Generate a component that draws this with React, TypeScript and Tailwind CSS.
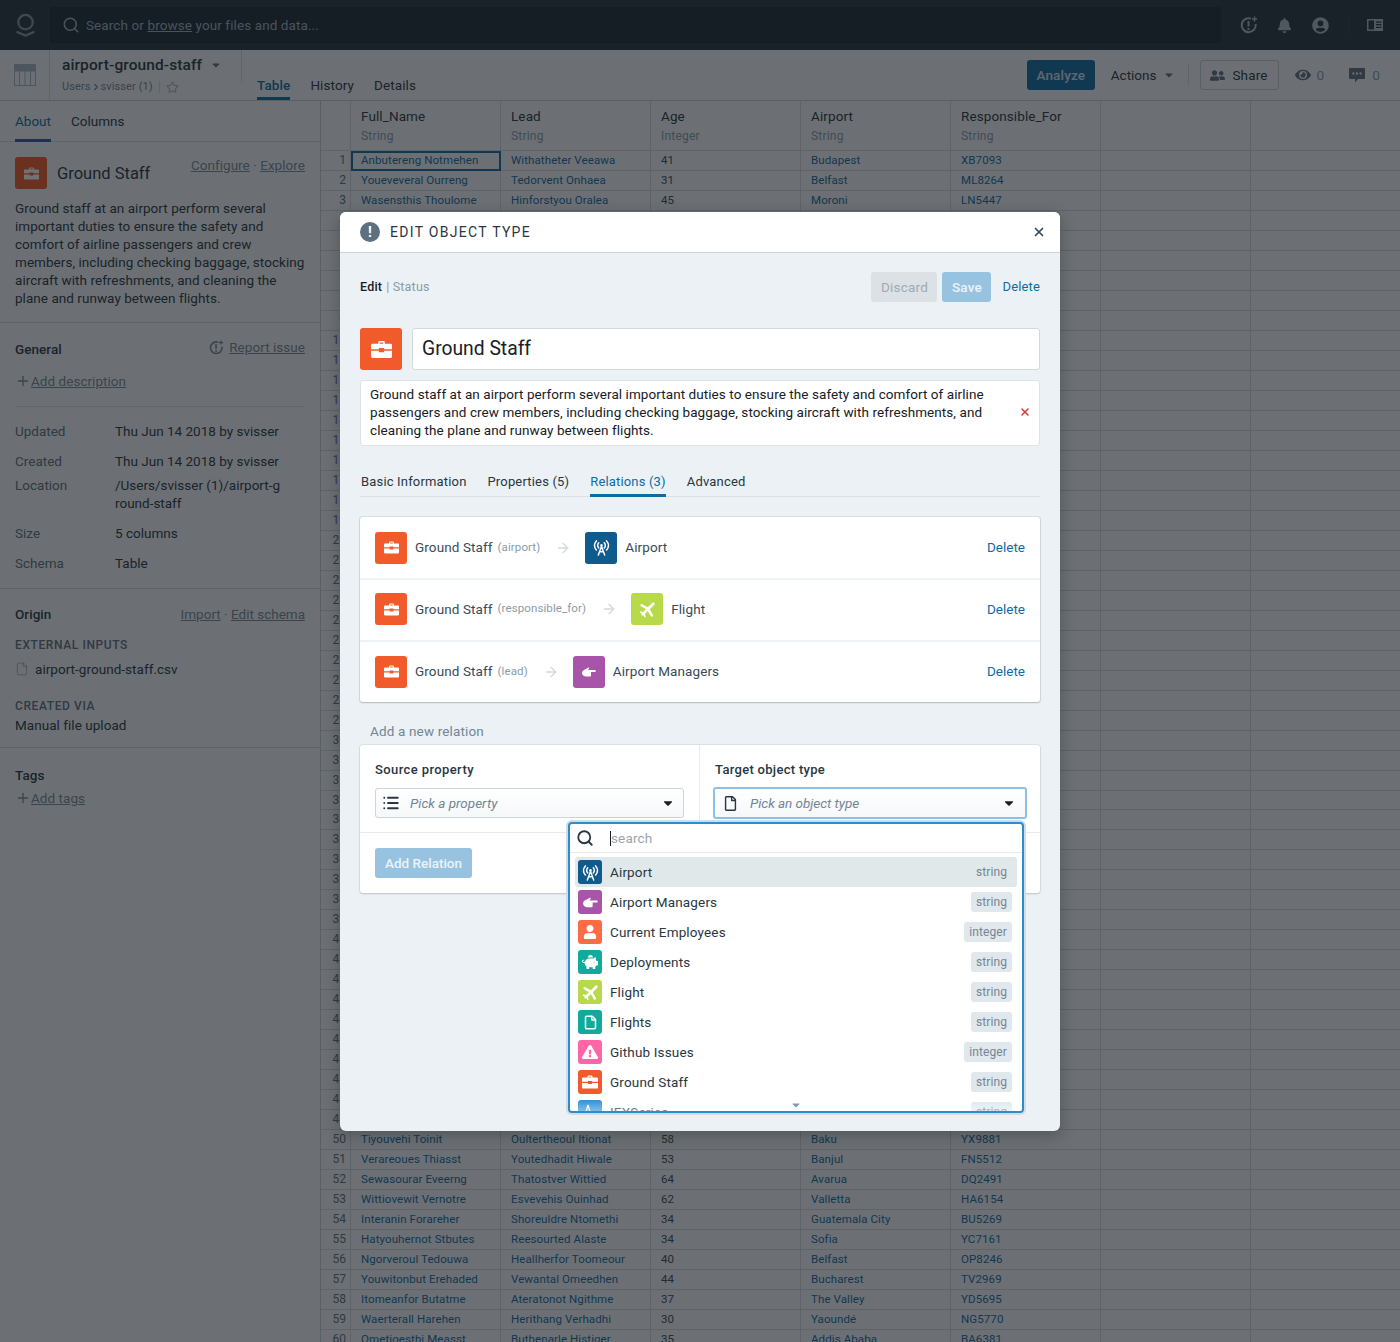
import React from 'react';
import { Search, Star, File, Activity, ChevronRight, Plus, X, ArrowRight, List } from 'lucide-react';
import {
  FaBell, FaUserCircle, FaUserFriends, FaEye,
  FaPiggyBank, FaUser, FaExclamationTriangle, FaCaretDown, FaRegFile,
} from 'react-icons/fa';

type Row = string[];

const topRows: Row[] = [
  ['Anbutereng Notmehen', 'Withatheter Veeawa', '41', 'Budapest', 'XB7093'],
  ['Youeveveral Ourreng', 'Tedorvent Onhaea', '31', 'Belfast', 'ML8264'],
  ['Wasensthis Thoulome', 'Hinforstyou Oralea', '45', 'Moroni', 'LN5447'],
];

const bottomRows: Row[] = [
  ['Tiyouvehi Toinit', 'Oultertheoul Itionat', '58', 'Baku', 'YX9881'],
  ['Verareoues Thiasst', 'Youtedhadit Hiwale', '53', 'Banjul', 'FN5512'],
  ['Sewasourar Eveerng', 'Thatostver Wittied', '64', 'Avarua', 'DQ2491'],
  ['Wittiovewit Vernotre', 'Esvevehis Ouinhad', '62', 'Valletta', 'HA6154'],
  ['Interanin Forareher', 'Shoreuldre Ntomethi', '34', 'Guatemala City', 'BU5269'],
  ['Hatyouhernot Stbutes', 'Reesourted Alaste', '34', 'Sofia', 'YC7161'],
  ['Ngorveroul Tedouwa', 'Heallherfor Toomeour', '40', 'Belfast', 'OP8246'],
  ['Youwitonbut Erehaded', 'Vewantal Omeedhen', '44', 'Bucharest', 'TV2969'],
  ['Itomeanfor Butatme', 'Ateratonot Ngithme', '37', 'The Valley', 'YD5695'],
  ['Waerterall Harehen', 'Herithang Verhadhi', '30', 'Yaoundé', 'NG5770'],
  ['Ometioesthi Measst', 'Buthenarle Histiger', '35', 'Addis Ababa', 'BA6381'],
];

const columns = [
  ['Full_Name', 'String'],
  ['Lead', 'String'],
  ['Age', 'Integer'],
  ['Airport', 'String'],
  ['Responsible_For', 'String'],
  ['', ''],
  ['', ''],
];

const Briefcase = ({ className }: { className?: string }) => (
  <svg viewBox="0 0 16 16" className={className} fill="currentColor">
    <path d="M5.5 3.6V2.4c0-.5.4-.9.9-.9h3.2c.5 0 .9.4.9.9v1.2H15c.5 0 1 .4 1 1v3.2H10v-.9H6v.9H0V4.6c0-.6.5-1 1-1h4.5zm1.2 0h2.6V2.7H6.7v.9zM0 9h6v1h4V9h6v4.4c0 .6-.5 1-1 1H1c-.5 0-1-.4-1-1V9z" />
  </svg>
);

const Antenna = ({ className }: { className?: string }) => (
  <svg viewBox="0 0 16 16" className={className} fill="none" stroke="currentColor" strokeWidth="1.4" strokeLinecap="round">
    <path d="M8 7l-3 8M8 7l3 8M6.2 12h3.6" />
    <circle cx="8" cy="6" r="1.2" fill="currentColor" stroke="none" />
    <path d="M5.4 3.6c-1.2 1.4-1.2 3.4 0 4.8M10.6 3.6c1.2 1.4 1.2 3.4 0 4.8M3.2 1.8c-2.2 2.6-2.2 6 0 8.6M12.8 1.8c2.2 2.6 2.2 6 0 8.6" />
  </svg>
);

const Plane = ({ className }: { className?: string }) => (
  <svg viewBox="0 0 16 16" className={className} fill="none" stroke="currentColor" strokeLinecap="round">
    <path d="M3.5 12.5L13.5 2.5" strokeWidth="2.6" />
    <path d="M8.5 7.5L2.5 4M8.5 7.5L12 13.5" strokeWidth="2.4" />
    <path d="M4.5 11.5L1.5 10.5M4.5 11.5L5.5 14.5" strokeWidth="1.5" />
  </svg>
);

const PointingHand = ({ className }: { className?: string }) => (
  <svg viewBox="0 0 16 16" className={className} fill="currentColor">
    <path d="M1 9c0-2 1.5-3 3-3.5l3.5-2c.6-.3 1 .4.6 1L7 6h7.2c.6 0 .8 1.9 0 2H10v3.5c0 .7-.5 1-1 1H5c-2 0-4-1.5-4-3.5z" />
  </svg>
);

const Logo = () => (
  <svg viewBox="0 0 20 26" className="w-[19px] h-[25px] text-[#8b9298]" fill="none" stroke="currentColor" strokeWidth="2.4">
    <circle cx="10" cy="9.5" r="7.6" />
    <path d="M1.5 20l8.5 3.6 8.5-3.6" strokeLinecap="round" />
  </svg>
);

// circle with an exclamation mark and a small plus in its top right corner
const NewIssue = ({ className }: { className?: string }) => (
  <svg viewBox="0 0 18 18" className={className} fill="none" stroke="currentColor">
    <path d="M11 2.6A7 7 0 1 0 15.6 8" strokeWidth="2" />
    <path d="M8.5 5v5.5M8.5 12v2" strokeWidth="2" />
    <path d="M14.5 0.5v5M12 3h5" strokeWidth="1.5" />
  </svg>
);

const CommentIcon = ({ className }: { className?: string }) => (
  <svg viewBox="0 0 16 16" className={className} fill="currentColor">
    <path d="M1 1h14a1 1 0 0 1 1 1v9a1 1 0 0 1-1 1H9l-3 3.5V12H1a1 1 0 0 1-1-1V2a1 1 0 0 1 1-1z" />
    <path d="M3.4 5.4h2v2h-2zM7 5.4h2v2H7zM10.6 5.4h2v2h-2z" fill="#f5f8fa" />
  </svg>
);

const TypeIcon = ({ bg, size, children }: { bg: string; size: string; children: React.ReactNode }) => (
  <div className={`${bg} ${size} rounded-[3px] flex items-center justify-center text-white shrink-0`}>{children}</div>
);

const Cell = ({ text, link, width }: { text: string; link?: boolean; width: string }) => (
  <div className={`${width} h-full shrink-0 border-r border-[#cfd6db] pl-[10px] truncate text-[11.5px] leading-[19px] tracking-[0.1px] ${link ? 'text-[#106ba3]' : 'text-[#394b59]'}`}>
    {text}
  </div>
);

const TableRow = ({ num, data }: { num: number; data?: Row }) => (
  <div className="flex h-[19.99px] border-b border-[#cfd6db] bg-[#f5f8fa]">
    <div className="w-[30px] shrink-0 h-full border-r border-[#cfd6db] pr-[4px] text-right text-[12px] leading-[19px] text-[#5c7080]">{num}</div>
    <Cell width="w-[150px]" text={data ? data[0] : ''} link />
    <Cell width="w-[150px]" text={data ? data[1] : ''} link />
    <Cell width="w-[150px]" text={data ? data[2] : ''} />
    <Cell width="w-[150px]" text={data ? data[3] : ''} link />
    <Cell width="w-[150px]" text={data ? data[4] : ''} link />
    <Cell width="w-[150px]" text="" />
    <div className="flex-1" />
  </div>
);

const Sidebar = () => (
  <aside className="w-[321px] shrink-0 border-r border-[#c5ccd2] bg-[#f5f8fa] text-[13.5px] tracking-[0.04px] text-[#293742]">
    <div className="h-[41px] flex gap-5 px-[15px] border-b border-[#cfd6db] tracking-normal">
      <span className="h-[41px] pt-[10px] border-b-[3px] border-[#106ba3] text-[#106ba3]">About</span>
      <span className="pt-[10px]">Columns</span>
    </div>
    <div className="h-[181px] px-[15px] pt-[15px] border-b border-[#cfd6db]">
      <div className="flex items-start">
        <TypeIcon bg="bg-[#f15a2b]" size="w-8 h-8">
          <Briefcase className="w-[15px] h-[15px]" />
        </TypeIcon>
        <span className="ml-[10px] mt-[6px] text-[16.5px] leading-[22px] tracking-normal">Ground Staff</span>
        <span className="ml-auto -mt-[2px] text-[#7a8a96]"><span className="underline">Configure</span> · <span className="underline">Explore</span></span>
      </div>
      <p className="mt-[10px] leading-[18px] w-[295px]">
        Ground staff at an airport perform several important duties to ensure the safety and comfort of airline passengers and crew members, including checking baggage, stocking aircraft with refreshments, and cleaning the plane and runway between flights.
      </p>
    </div>
    <div className="h-[266px] px-[15px] pt-[16px] border-b border-[#cfd6db]">
      <div className="flex justify-between leading-[20px]">
        <span className="font-medium">General</span>
        <span className="flex items-center gap-[5px] text-[#7a8a96] -mt-1">
          <NewIssue className="w-[15px] h-[15px]" />
          <span className="underline">Report issue</span>
        </span>
      </div>
      <div className="mt-3 flex items-center text-[#7a8a96] leading-[20px]">
        <Plus className="w-4 h-4" />
        <span className="underline">Add description</span>
      </div>
      <div className="mt-[15px] border-t border-[#d8e1e8]" />
      <div className="mt-[15px] grid grid-cols-[100px_167px] leading-[18px] tracking-normal [&>span:nth-child(odd)]:text-[#5c7080]">
        <span>Updated</span><span>Thu Jun 14 2018 by svisser</span>
        <span className="mt-3">Created</span><span className="mt-3">Thu Jun 14 2018 by svisser</span>
        <span className="mt-[6px]">Location</span><span className="mt-[6px] break-all">/Users/svisser (1)/airport-ground-staff</span>
        <span className="mt-3">Size</span><span className="mt-3">5 columns</span>
        <span className="mt-3">Schema</span><span className="mt-3">Table</span>
      </div>
    </div>
    <div className="h-[159px] px-[15px] pt-[15px] border-b border-[#cfd6db]">
      <div className="flex justify-between leading-[20px]">
        <span className="font-medium">Origin</span>
        <span className="text-[#7a8a96] tracking-normal"><span className="underline">Import</span> · <span className="underline">Edit schema</span></span>
      </div>
      <div className="mt-[13px] text-[12px] font-medium tracking-[0.6px] text-[#5c7080] leading-[16px]">EXTERNAL INPUTS</div>
      <div className="mt-[6px] flex items-center gap-[6px] leading-[20px]">
        <File className="w-[14px] h-4 text-[#7a8a96]" strokeWidth={1} />
        <span>airport-ground-staff.csv</span>
      </div>
      <div className="mt-[19px] text-[12px] font-medium tracking-[0.6px] text-[#5c7080] leading-[16px]">CREATED VIA</div>
      <div className="mt-[1px] leading-[20px]">Manual file upload</div>
    </div>
    <div className="px-[15px] pt-[17px]">
      <div className="font-medium leading-[20px]">Tags</div>
      <div className="mt-[3px] flex items-center text-[#7a8a96] leading-[20px]">
        <Plus className="w-4 h-4" />
        <span className="underline">Add tags</span>
      </div>
    </div>
  </aside>
);

const DataTable = () => (
  <main className="flex-1 overflow-hidden bg-[#f5f8fa]">
    <div className="flex h-[50px] border-b border-[#cfd6db]">
      <div className="w-[30px] shrink-0 border-r border-[#cfd6db]" />
      {columns.map((c, i) => (
        <div key={i} className={`${i === 6 ? 'flex-1' : 'w-[150px] border-r border-[#cfd6db]'} shrink-0 pl-[10px] pt-[6px]`}>
          <div className="text-[13.5px] leading-[18px] tracking-[0.1px] text-[#293742]">{c[0]}</div>
          <div className="mt-[3px] text-[12px] leading-[16px] tracking-[0.2px] text-[#8a9ba8]">{c[1]}</div>
        </div>
      ))}
    </div>
    <div className="relative">
      <div className="absolute left-[30px] top-0 w-[150px] h-[20px] border-2 border-[#106ba3]" />
      {Array.from({ length: 60 }, (_, i) => (
        <TableRow key={i} num={i + 1} data={i < 3 ? topRows[i] : i >= 49 ? bottomRows[i - 49] : undefined} />
      ))}
    </div>
  </main>
);

const relations = [
  { prop: '(airport)', target: 'Airport', bg: 'bg-[#0f5b8d]', icon: <Antenna className="w-[17px] h-[17px]" />, row: 'h-[61px]' },
  { prop: '(responsible_for)', target: 'Flight', bg: 'bg-[#b8d94a]', icon: <Plane className="w-[17px] h-[17px]" />, row: 'h-[62px] border-t-2 border-[#f0f3f5] pb-[2px]' },
  { prop: '(lead)', target: 'Airport Managers', bg: 'bg-[#a854a8]', icon: <PointingHand className="w-[16px] h-[16px]" />, row: 'h-[62px] border-t-2 border-[#f0f3f5] pb-[1px]' },
];

const options = [
  { name: 'Airport', tag: 'string', bg: 'bg-[#0f5b8d]', icon: <Antenna className="w-[17px] h-[17px]" /> },
  { name: 'Airport Managers', tag: 'string', bg: 'bg-[#a854a8]', icon: <PointingHand className="w-[17px] h-[17px]" /> },
  { name: 'Current Employees', tag: 'integer', bg: 'bg-[#ff6b45]', icon: <FaUser className="w-[14px] h-[14px]" /> },
  { name: 'Deployments', tag: 'string', bg: 'bg-[#10ab9c]', icon: <FaPiggyBank className="w-[16px] h-[16px]" /> },
  { name: 'Flight', tag: 'string', bg: 'bg-[#b8d94a]', icon: <Plane className="w-[17px] h-[17px]" /> },
  { name: 'Flights', tag: 'string', bg: 'bg-[#10ab9c]', icon: <File className="w-[15px] h-[15px]" strokeWidth={2.4} /> },
  { name: 'Github Issues', tag: 'integer', bg: 'bg-[#ff66a8]', icon: <FaExclamationTriangle className="w-[16px] h-[16px]" /> },
  { name: 'Ground Staff', tag: 'string', bg: 'bg-[#f15a2b]', icon: <Briefcase className="w-[16px] h-[16px]" /> },
  { name: 'IEXSeries', tag: 'string', bg: 'bg-[#2b8fd6]', icon: <Activity className="w-[16px] h-[16px]" /> },
];

const Dropdown = () => (
  <div className="absolute left-[228px] top-[76px] w-[456px] h-[291px] rounded-[4px] bg-white border-2 border-[#2b8ecb] shadow-[0_0_0_2px_#d3dce3] overflow-hidden">
    <div className="h-[29px] flex items-center border-b border-[#e6ebef] pl-[6px]">
      <Search className="w-[18px] h-[18px] text-[#293742]" strokeWidth={2.4} />
      <span className="ml-[16px] w-px h-[15px] bg-[#182026]" />
      <span className="text-[13.5px] tracking-[0.15px] text-[#9aa5ae]">search</span>
    </div>
    <div className="px-[5px] pt-[4px]">
      {options.map((o, i) => (
        <div key={o.name} className={`h-[30px] flex items-center pl-[3px] pr-[5px] rounded-[3px] ${i === 0 ? 'bg-[#e1e8ea]' : ''}`}>
          <TypeIcon bg={o.bg} size="w-6 h-6">{o.icon}</TypeIcon>
          <span className="ml-2 text-[13.5px] tracking-[0.15px] text-[#293742]">{o.name}</span>
          <span className={`ml-auto h-5 px-[5px] rounded-[3px] text-[12px] leading-[20px] tracking-[0.1px] text-[#738694] ${i === 0 ? '' : 'bg-[#e1e8ed]'}`}>{o.tag}</span>
        </div>
      ))}
    </div>
    <div className="absolute left-0 right-0 bottom-0 h-[12px] bg-gradient-to-t from-white/40 to-white/0" />
    <FaCaretDown className="absolute left-[220px] bottom-[0px] w-3 h-3 text-[#8a9ba8]" />
  </div>
);

const EditModal = () => (
  <div className="absolute left-[340px] top-[212px] w-[720px] h-[919px] rounded-[6px] bg-[#ebf1f5] shadow-[0_4px_16px_rgba(16,22,26,0.3)] text-[#182026]">
    <div className="h-[41px] bg-white rounded-t-[6px] border-b border-[#ccd3d8] flex items-center pl-5 pr-[14px]">
      <span className="w-5 h-5 rounded-full bg-[#5c7080] flex items-center justify-center text-white text-[14px] font-bold">!</span>
      <span className="ml-[10px] text-[14px] tracking-[1.3px] text-[#293742]">EDIT OBJECT TYPE</span>
      <X className="ml-auto w-[14px] h-[14px] text-[#394b59]" strokeWidth={3} />
    </div>
    <div className="px-5">
      <div className="mt-[19px] h-[30px] flex items-center text-[12.5px] tracking-[0.2px]">
        <span className="font-medium">Edit</span>
        <span className="ml-1 text-[#8a9ba8]">| Status</span>
        <span className="ml-auto w-[66px] h-[30px] rounded-[3px] bg-[#dbe1e5] text-[#9fabb4] text-[13.5px] leading-[30px] text-center">Discard</span>
        <span className="ml-[5px] w-[49px] h-[30px] rounded-[3px] bg-[#97c3e0] text-white/80 text-[13.5px] font-medium leading-[30px] text-center">Save</span>
        <span className="ml-[11px] text-[13px] tracking-[0.15px] text-[#106ba3]">Delete</span>
      </div>
      <div className="mt-[26px] flex gap-[10px]">
        <TypeIcon bg="bg-[#f15a2b]" size="w-[42px] h-[42px]">
          <Briefcase className="w-[21px] h-[21px]" />
        </TypeIcon>
        <div className="flex-1 h-[42px] bg-white border border-[#d3d9de] rounded-[3px] pl-[9px] text-[19.3px] leading-[40px]">Ground Staff</div>
      </div>
      <div className="mt-[10px] h-[66px] bg-white border border-[#dde3e8] rounded-[3px] pl-[9px] pr-[8px] pb-[2px] flex items-center">
        <p className="w-[625px] text-[13.5px] leading-[18px] tracking-[0.07px]">
          Ground staff at an airport perform several important duties to ensure the safety and comfort of airline passengers and crew members, including checking baggage, stocking aircraft with refreshments, and cleaning the plane and runway between flights.
        </p>
        <X className="ml-auto w-3 h-3 text-[#db3737]" strokeWidth={3} />
      </div>
      <div className="mt-[26px] pl-px flex gap-[21px] h-[25px] border-b border-[#d8e1e8] text-[13px] leading-[19px] tracking-[0.17px] text-[#293742]">
        <span>Basic Information</span>
        <span>Properties (5)</span>
        <span className="h-[25px] border-b-[3px] border-[#106ba3] text-[#106ba3]">Relations (3)</span>
        <span>Advanced</span>
      </div>
      <div className="mt-5 rounded-[3px] bg-white shadow-[0_0_0_1px_rgba(16,22,26,0.08),0_1px_2px_rgba(16,22,26,0.18)]">
        {relations.map((r) => (
          <div key={r.target} className={`${r.row} flex items-center px-[15px]`}>
            <TypeIcon bg="bg-[#f15a2b]" size="w-8 h-8">
              <Briefcase className="w-[15px] h-[15px]" />
            </TypeIcon>
            <span className="ml-2 text-[13.5px] tracking-[0.1px] text-[#394b59]">Ground Staff</span>
            <span className="ml-[5px] text-[11.5px] tracking-[0.1px] text-[#8a9ba8]">{r.prop}</span>
            <ArrowRight className="ml-[15px] mr-[14px] w-4 h-4 text-[#d3d9de]" />
            <TypeIcon bg={r.bg} size="w-8 h-8">{r.icon}</TypeIcon>
            <span className="ml-2 text-[13.5px] tracking-[0.1px] text-[#394b59]">{r.target}</span>
            <span className="ml-auto text-[13.5px] text-[#106ba3]">Delete</span>
          </div>
        ))}
      </div>
      <div className="mt-[20px] pl-[10px] text-[13.5px] leading-[18px] tracking-[0.15px] text-[#738694]">Add a new relation</div>
      <div className="mt-[5px] h-[148px] rounded-[3px] bg-white shadow-[0_0_0_1px_rgba(16,22,26,0.06),0_1px_2px_rgba(16,22,26,0.15)]">
        <div className="h-[88px] flex border-b border-[#e6ebef]">
          <div className="w-[340px] border-r border-[#e6ebef] pl-[15px] pr-[15px] pt-[16px]">
            <div className="text-[13px] leading-[18px] font-medium tracking-[0.4px] text-[#293742]">Source property</div>
            <div className="mt-[9px] h-[30px] rounded-[3px] border border-[#ced5da] bg-gradient-to-b from-white to-[#f5f8fa] flex items-center pl-[6px] pr-[8px]">
              <List className="w-[18px] h-[18px] text-[#293742]" strokeWidth={2.5} />
              <span className="ml-[10px] text-[13.5px] italic text-[#738694]">Pick a property</span>
              <FaCaretDown className="ml-auto w-[14px] h-[14px] text-[#182026]" />
            </div>
          </div>
          <div className="flex-1 pl-[15px] pr-[13px] pt-[16px]">
            <div className="text-[13px] leading-[18px] font-medium tracking-[0.3px] text-[#293742]">Target object type</div>
            <div className="-ml-[2px] mt-[8px] h-[32px] rounded-[3px] border-2 border-[#8fc0e4] bg-gradient-to-b from-white to-[#f5f8fa] flex items-center pl-[8px] pr-[9px]">
              <FaRegFile className="w-[15px] h-[15px] text-[#293742]" />
              <span className="ml-[12px] text-[13.5px] italic tracking-[-0.05px] text-[#738694]">Pick an object type</span>
              <FaCaretDown className="ml-auto w-[14px] h-[14px] text-[#182026]" />
            </div>
          </div>
        </div>
        <div className="pl-[15px] pt-[15px]">
          <div className="w-[97px] h-[30px] rounded-[3px] bg-[#97c3e0] text-white/80 text-[13.5px] font-medium leading-[30px] text-center">Add Relation</div>
        </div>
      </div>
    </div>
    <div className="absolute left-0 top-[534px] w-full h-0">
      <Dropdown />
    </div>
  </div>
);

export default function App() {
  return (
    <div className="relative w-[1400px] h-[1342px] overflow-hidden bg-[#f5f8fa] font-['Roboto',sans-serif]">
      <header className="h-[50px] bg-[#27343f] flex items-center pl-[16px] pr-[16px]">
        <Logo />
        <div className="ml-[15px] w-[1171px] h-[36px] rounded-[3px] border border-[#1d2731] bg-[#1d2935] flex items-center pl-[11px] text-[13.5px] tracking-[0.1px] text-[#9fb0bd]">
          <Search className="w-[18px] h-[18px]" />
          <span className="ml-[6px]">Search or <span className="underline">browse</span> your files and data...</span>
        </div>
        <div className="ml-[19px] flex items-center text-[#aeb9c2]">
          <NewIssue className="w-[18px] h-[18px]" />
          <FaBell className="ml-[19px] w-[15px] h-[15px]" />
          <FaUserCircle className="ml-[20px] w-[17px] h-[17px]" />
          <span className="ml-[19px] w-px h-5 bg-[#33424f]" />
          <svg viewBox="0 0 16 12" className="ml-[18px] w-4 h-3" fill="currentColor">
            <path d="M0 0h16v12H0V0zm1.5 1.5v9H7v-9H1.5zm7.5 1v1.2h5.5V2.5H9zm0 2.6v1.2h5.5V5.1H9zm0 2.6v1.2h5.5V7.7H9z" fillRule="evenodd" />
          </svg>
        </div>
      </header>
      <div className="h-[51px] flex border-b border-[#c5ccd2] bg-[#f5f8fa] text-[#293742]">
        <div className="w-[50px] border-r border-[#d3d9de] flex items-center justify-center">
          <svg viewBox="0 0 22 22" className="w-[22px] h-[22px] text-[#a7b6c2]" fill="none" stroke="currentColor">
            <rect x="0.5" y="0.5" width="21" height="21" />
            <rect x="0" y="0" width="22" height="7" fill="currentColor" />
            <path d="M5.5 7v15M11 7v15M16.5 7v15" />
          </svg>
        </div>
        <div className="w-[192px] pl-3 pt-[4px] border-r border-[#d3d9de] mt-[17px] -translate-y-[17px]">
          <div className="flex items-center text-[15.5px] leading-[22px] font-medium tracking-[0.1px]">
            airport-ground-staff
            <FaCaretDown className="ml-2 w-3 h-3 text-[#5c7080]" />
          </div>
          <div className="flex items-center mt-[3px] text-[11px] leading-[16px] tracking-[0.1px] text-[#738694]">
            Users <ChevronRight className="w-[10px] h-[10px]" strokeWidth={3} /> svisser (1)
            <span className="mx-[6px] w-px h-3 bg-[#d3d9de]" />
            <Star className="w-[13px] h-[13px] text-[#a7b6c2]" />
          </div>
        </div>
        <div className="flex gap-5 pl-[15px] text-[13.5px] tracking-[0.1px]">
          <span className="h-[50px] pt-[25px] border-b-[3px] border-[#106ba3] text-[#106ba3] font-medium">Table</span>
          <span className="pt-[25px]">History</span>
          <span className="pt-[25px]">Details</span>
        </div>
        <div className="ml-auto flex items-center pr-5 text-[13.5px] tracking-[0.15px]">
          <span className="w-[68px] h-[30px] rounded-[3px] bg-[#106ba3] text-white/80 font-medium leading-[30px] text-center">Analyze</span>
          <span className="ml-4 tracking-normal">Actions</span>
          <FaCaretDown className="ml-[6px] w-3 h-3 text-[#5c7080]" />
          <span className="ml-[13px] w-px h-5 bg-[#d3d9de]" />
          <span className="ml-[11px] w-[79px] h-[30px] rounded-[3px] border border-[#c5ccd2] flex items-center justify-center gap-[7px]">
            <FaUserFriends className="w-[15px] h-[15px] text-[#5c7080]" /> Share
          </span>
          <FaEye className="ml-4 w-4 h-4 text-[#5c7080]" />
          <span className="ml-[6px] text-[#8a9ba8]">0</span>
          <CommentIcon className="ml-[25px] w-4 h-4 text-[#5c7080]" />
          <span className="ml-[7px] text-[#8a9ba8]">0</span>
        </div>
      </div>
      <div className="flex h-[1241px]">
        <Sidebar />
        <DataTable />
      </div>
      <div className="absolute inset-0 bg-[#10161a]/60" />
      <EditModal />
    </div>
  );
}
